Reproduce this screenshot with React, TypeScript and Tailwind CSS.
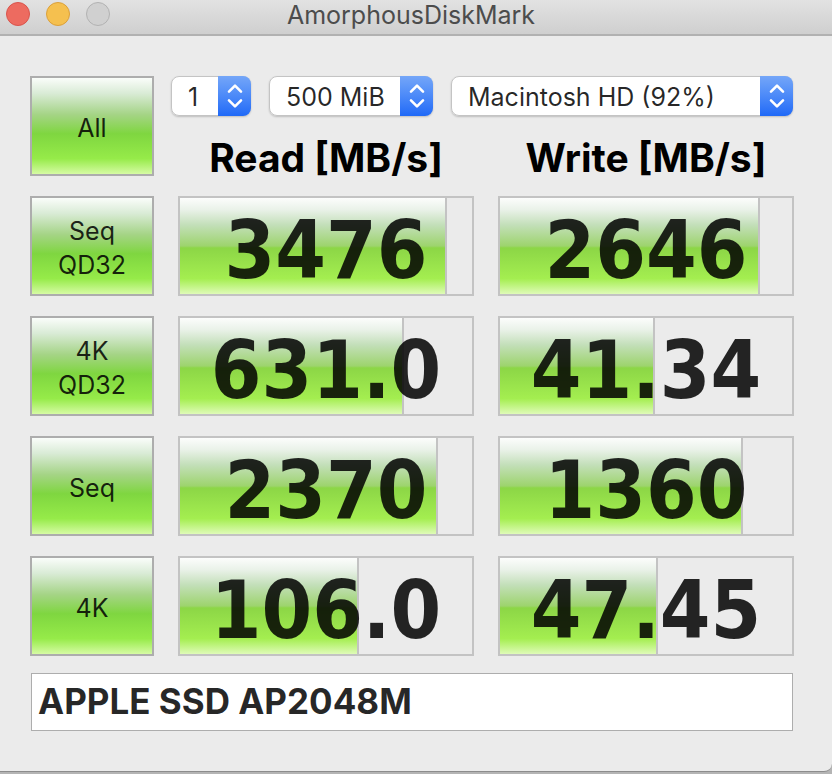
import { useState } from "react";

type Result = { value: string; fill: number };
type Test = { lines: string[]; read: Result; write: Result };

// `fill` is the share of the gauge that is coloured, in percent.
const tests: Test[] = [
  { lines: ["Seq", "QD32"], read: { value: "3476", fill: 91.6 }, write: { value: "2646", fill: 89.2 } },
  { lines: ["4K", "QD32"], read: { value: "631.0", fill: 76.7 }, write: { value: "41.34", fill: 53.1 } },
  { lines: ["Seq"], read: { value: "2370", fill: 88.2 }, write: { value: "1360", fill: 83.2 } },
  { lines: ["4K"], read: { value: "106.0", fill: 61.3 }, write: { value: "47.45", fill: 54.2 } },
];

function TestButton({ lines }: { lines: string[] }) {
  return (
    <button
      type="button"
      className="flex h-[100px] w-[124px] shrink-0 flex-col items-center justify-center border-2 border-[#adadad] bg-[linear-gradient(to_bottom,#fafdfa_0%,#d9ebd6_16%,#a5d486_38%,#7fd640_58%,#96eb49_84%,#d6fba4_100%)] pt-1 text-[25px] leading-[34px] text-black/85"
    >
      {lines.map((line) => (
        <span key={line}>{line}</span>
      ))}
    </button>
  );
}

function Gauge({ value, fill }: Result) {
  return (
    <div className="relative flex h-[100px] items-center justify-center border-2 border-[#c3c3c3]">
      <div
        className="absolute inset-y-0 left-0 border-r-2 border-[#c3c3c3] bg-[linear-gradient(to_bottom,#fcfdfc_0%,#eaf2e9_12%,#c3dfb9_28%,#9dd46d_50%,#8cd646_52%,#a4ee50_84%,#dffbb8_100%)]"
        style={{ width: `${fill}%` }}
      />
      <span className="relative pt-2 font-['DejaVu_Sans_Condensed','DejaVu_Sans',sans-serif] text-[81px] leading-[96px] font-bold text-black/85">
        {value}
      </span>
    </div>
  );
}

function Picker({ label, options, className }: { label: string; options: string[]; className: string }) {
  return (
    <div className={`relative h-10 rounded-lg shadow-[0_1px_2px_rgba(0,0,0,0.2)] ${className}`}>
      <select
        aria-label={label}
        className="h-full w-full appearance-none rounded-lg border border-[#c4c4c4] bg-white pt-0.5 pr-9 pl-4 text-[25px] leading-8 text-black/85 outline-none"
      >
        {options.map((option) => (
          <option key={option}>{option}</option>
        ))}
      </select>
      <span className="pointer-events-none absolute inset-y-0 right-0 flex w-[33px] items-center justify-center rounded-r-lg bg-linear-to-b from-[#74a6f8] to-[#1f69f7]">
        <svg
          width="18"
          height="26"
          viewBox="0 0 18 26"
          fill="none"
          stroke="white"
          strokeWidth="2.6"
          strokeLinecap="round"
          strokeLinejoin="round"
          aria-hidden="true"
        >
          <path d="M3 8.6l6-6 6 6M3 17.4l6 6 6-6" />
        </svg>
      </span>
    </div>
  );
}

export default function App() {
  const [note, setNote] = useState("APPLE SSD AP2048M");

  return (
    <div className="bg-[#b4b4b4] pb-0.5 font-[Inter,'Liberation_Sans',sans-serif]">
      <div className="rounded-br-lg border-b border-[#8c8c8c] bg-[#ebebeb]">
        <header className="relative flex h-9 items-start justify-center border-b-2 border-[#b1b1b1] bg-linear-to-b from-[#e2e2e2] to-[#cfcfcf] pr-2.5">
          <div className="absolute top-0.5 left-1.5 flex gap-4">
            <button type="button" aria-label="Close" className="size-6 rounded-full border border-[#d9544c] bg-[#ed6b60]" />
            <button type="button" aria-label="Minimize" className="size-6 rounded-full border border-[#dba03b] bg-[#f5c04f]" />
            <button type="button" aria-label="Zoom" className="size-6 rounded-full border border-[#b2b2b2] bg-[#d0d0d0]" />
          </div>
          <h1 className="text-[25px] leading-[30px] text-[#4c4c4c]">AmorphousDiskMark</h1>
        </header>

        <main className="pt-10 pr-[38px] pb-10 pl-[30px]">
          <div className="flex">
            <TestButton lines={["All"]} />
            <div className="ml-[17px] flex-1">
              <div className="mr-px flex gap-[18px]">
                <Picker label="Test count" options={["1", "2", "3", "5", "9"]} className="w-20" />
                <Picker label="Test size" options={["500 MiB", "1 GiB", "2 GiB"]} className="w-[164px]" />
                <Picker label="Volume" options={["Macintosh HD (92%)"]} className="flex-1" />
              </div>
              <div className="grid grid-cols-2 gap-6 pt-6 pl-[7px] text-center text-[39px] leading-9 font-bold text-black">
                <h2>Read [MB/s]</h2>
                <h2>Write [MB/s]</h2>
              </div>
            </div>
          </div>

          <div className="mt-5 flex flex-col gap-5">
            {tests.map((test) => (
              <div key={test.lines.join(" ")} className="grid grid-cols-[124px_1fr_1fr] gap-6">
                <TestButton lines={test.lines} />
                <Gauge {...test.read} />
                <Gauge {...test.write} />
              </div>
            ))}
          </div>

          <div className="mx-px mt-[17px]">
            <input
              type="text"
              aria-label="Drive name"
              value={note}
              onChange={(event) => setNote(event.target.value)}
              className="block h-[58px] w-full border border-[#adadad] bg-white px-1.5 pb-0.5 text-[35px] leading-[52px] font-bold text-black/85 outline-none"
            />
          </div>
        </main>
      </div>
    </div>
  );
}
